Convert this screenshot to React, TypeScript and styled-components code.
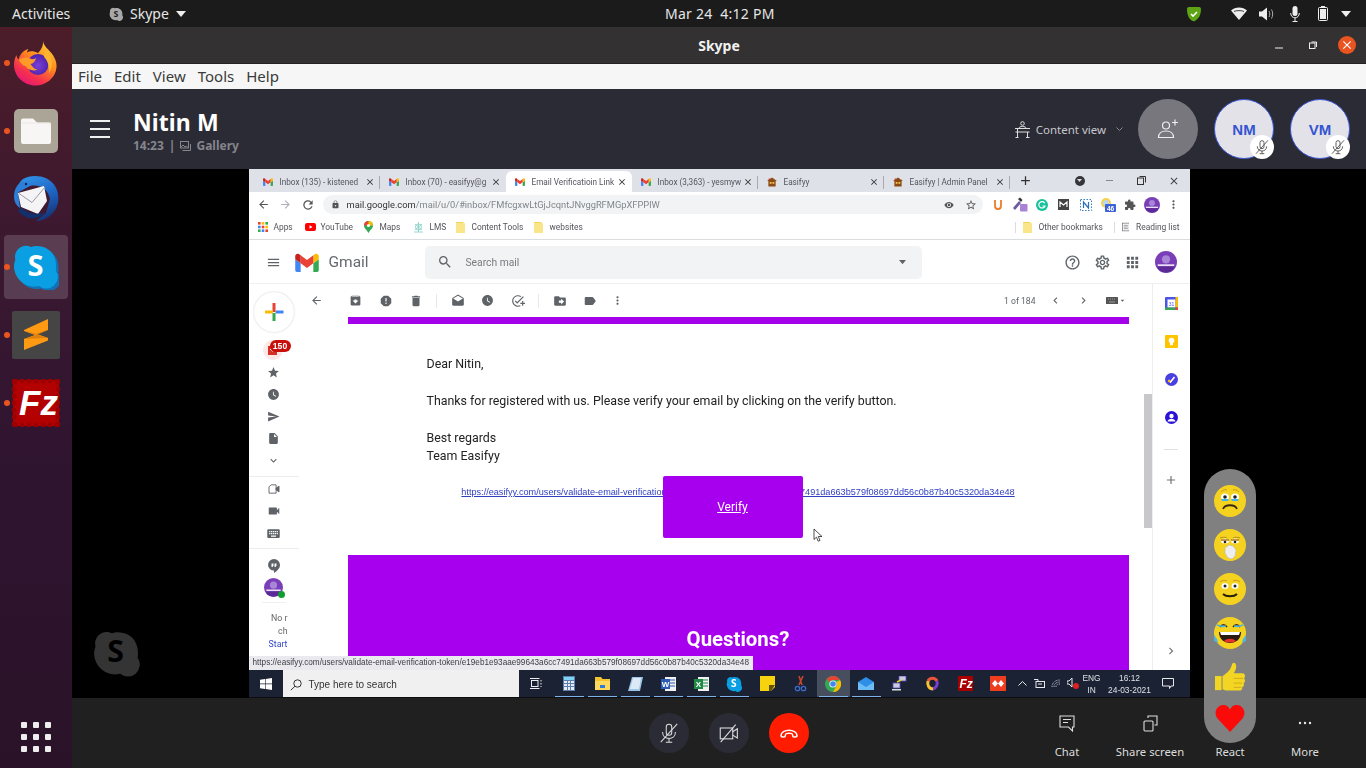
import React from 'react';
import styled, { createGlobalStyle } from 'styled-components';
import {
  MdAddTask, MdApps, MdArchive, MdArrowBack, MdArrowForward, MdChevronLeft, MdChevronRight, MdDelete, MdDrafts,
  MdDriveFileMove, MdExpandMore, MdExtension, MdHelpOutline, MdInsertDriveFile, MdKeyboard, MdLabel, MdLock, MdMenu,
  MdMoreVert, MdOutlineSettings, MdOutlineStarBorder, MdRefresh, MdRemoveRedEye, MdReport, MdSearch,
  MdSend, MdStar, MdVideocam, MdWatchLater, MdAdd, MdClose, MdArrowDropDown,
} from 'react-icons/md';

const Global = createGlobalStyle`
  html, body { margin: 0; padding: 0; background: #000; }
  * { box-sizing: border-box; }
`;

const UI = `"Noto Sans", "Open Sans", sans-serif`;
const WEB = `Roboto, "Liberation Sans", sans-serif`;

const Root = styled.div`
  position: relative; width: 1366px; height: 768px; overflow: hidden;
  display: flex; flex-direction: column; font-family: ${UI}; background: #000;
`;

/* Ubuntu top bar */
const TopBar = styled.header`
  height: 27px; flex: none; background: #1b1b1b; color: #e6e6e6; display: flex; align-items: center;
  font-size: 14px; padding-right: 13px;
`;
const Activities = styled.span`margin-left: 12px; width: 97px;`;
const AppMenu = styled.span`display: flex; align-items: center; gap: 7px; width: 556px;`;
const DateText = styled.span`width: 109px; text-align: center; white-space: pre; letter-spacing: .25px;`;
const Tray = styled.div`margin-left: auto; display: flex; align-items: center;`;
const TraySlot = styled.span<{ $w?: number; $mr?: number }>`
  width: ${p => p.$w ?? 28}px; margin-right: ${p => p.$mr ?? 0}px; display: flex; justify-content: center; align-items: center;
`;

const Body = styled.div`flex: 1; display: flex; min-height: 0;`;

/* Dock */
const Dock = styled.nav`
  width: 72px; flex: none; padding-top: 2px; display: flex; flex-direction: column;
  background: linear-gradient(180deg, #4c1d29 0%, #3b1830 30%, #2f1430 60%, #2a1328 100%);
`;
const DockItem = styled.div<{ $selected?: boolean; $dot?: boolean }>`
  position: relative; height: 68px; display: flex; align-items: center; justify-content: center;
  ${p => p.$selected ? `
    &::before { content: ''; position: absolute; left: 4px; right: 4px; top: 2px; bottom: 2px; border-radius: 4px; background: rgba(255,255,255,.16); }
  ` : ''}
  ${p => p.$dot ? `
    &::after { content: ''; position: absolute; left: 4px; top: 50%; margin-top: -3px; width: 6px; height: 6px; border-radius: 50%; background: #e95420; }
  ` : ''}
  & > svg { position: relative; }
`;
const DockGrid = styled.div`
  margin: auto 0 16px 21px; display: grid; grid-template-columns: repeat(3, 6px); grid-auto-rows: 6px; gap: 6px;
`;
const DockGridDot = styled.i`background: #eee; border-radius: 1px; display: block;`;

/* Skype window */
const Win = styled.main`flex: 1; min-width: 0; display: flex; flex-direction: column;`;
const TitleBar = styled.div`
  height: 37px; flex: none; background: #333131; color: #f2f2f2; display: grid; grid-template-columns: 1fr auto 1fr; align-items: center;
  border-bottom: 1px solid #232323;
`;
const TitleText = styled.span`font-size: 14px; font-weight: 700;`;
const WinControls = styled.div`grid-column: 3; justify-self: end; display: flex; padding-right: 2px; align-items: center;`;
const WinSlot = styled.span`width: 34px; height: 20px; display: flex; align-items: center; justify-content: center;`;
const CloseCircle = styled.span`
  width: 18px; height: 18px; border-radius: 50%; background: #e95420; display: flex; align-items: center; justify-content: center;
`;
const MenuBar = styled.div`
  height: 25px; flex: none; background: #f6f6f6; color: #3a3a3a; font-size: 15px; display: flex; align-items: center; gap: 12px; padding: 0 0 2px 6px;
`;

const CallHeader = styled.div`
  height: 80px; flex: none; background: #2b2b36; display: flex; align-items: center; padding: 0 16px 0 18px;
`;
const Burger = styled.div`
  width: 20px; display: flex; flex-direction: column; gap: 6px; margin-right: 23px;
`;
const BurgerLine = styled.i`display: block; height: 2px; background: #f0f0f0;`;
const CallInfo = styled.div`display: flex; flex-direction: column; margin-top: 1px;`;
const CallName = styled.div`font-size: 23px; font-weight: 700; color: #fff; line-height: 32px; letter-spacing: .1px;`;
const CallMeta = styled.div`
  display: flex; align-items: center; gap: 5px; color: #85858c; font-size: 12px; font-weight: 700; line-height: 16px;
`;
const HeaderRight = styled.div`margin-left: auto; display: flex; align-items: center;`;
const ContentView = styled.div`display: flex; align-items: center; color: #c8c8cc; font-size: 11.5px; gap: 6px; margin-right: 15px;`;
const Chevron = styled.span`margin-left: 4px; display: flex;`;
const AddCircle = styled.div`
  width: 60px; height: 60px; border-radius: 50%; background: #77777d; display: flex; align-items: center; justify-content: center; margin-right: 16px;
`;
const Avatar = styled.div<{ $last?: boolean }>`
  position: relative; width: 60px; height: 60px; border-radius: 50%; background: #e4e2e9; border: 1px solid #3b57d6;
  display: flex; align-items: center; justify-content: center; color: #3454d1; font-size: 15px; font-weight: 700;
  font-family: "Liberation Sans", sans-serif; margin-right: ${p => (p.$last ? 0 : 16)}px;
`;
const MuteBadge = styled.span`
  position: absolute; right: -1px; bottom: -1px; width: 24px; height: 24px; border-radius: 50%; background: #fff;
  display: flex; align-items: center; justify-content: center;
`;

const Stage = styled.section`flex: 1; min-height: 0; background: #000; display: flex; justify-content: center; position: relative;`;
const Watermark = styled.div`position: absolute; left: 20px; top: 460px; display: flex;`;

/* Shared screen */
const Screen = styled.div`
  position: relative; width: 941px; height: 529px; background: #fff; display: flex; flex-direction: column; overflow: hidden;
  filter: blur(.3px); font-family: ${WEB};
`;
const TabStrip = styled.div`
  height: 23px; flex: none; background: #dfe1e9; display: flex; align-items: flex-end; padding-left: 5px; color: #4b4b55;
`;
const Tab = styled.div<{ $active?: boolean; $sep?: boolean }>`
  position: relative; width: 126px; height: 21px; display: flex; align-items: center; padding-left: 9px; font-size: 8.2px;
  background: ${p => (p.$active ? '#fff' : 'transparent')}; border-radius: 6px 6px 0 0;
  ${p => (p.$sep ? `&::after { content:''; position:absolute; right:0; top:5px; bottom:3px; width:1px; background:#a9a9b2; }` : '')}
`;
const TabLabel = styled.span`width: 81px; margin-left: 7px; white-space: nowrap; color: #555560; flex: none;`;
const TabClose = styled.span`display: flex; margin-left: 4px; color: #333; flex: none;`;
const StripRight = styled.div`margin-left: auto; display: flex; height: 23px; align-items: center;`;
const StripPlus = styled.div`margin: 0 0 0 8px; height: 23px; display: flex; align-items: center; color: #333;`;
const StripSlot = styled.span`width: 32px; height: 23px; display: flex; align-items: center; justify-content: center; color: #444;`;
const StripOrb = styled.span`
  width: 10px; height: 10px; border-radius: 50%; background: #35353b; margin-right: 9px; display: flex; align-items: center; justify-content: center;
`;

const Toolbar = styled.div`height: 25px; flex: none; display: flex; align-items: center; padding-left: 4px; background: #fff;`;
const NavSlot = styled.span<{ $dim?: boolean }>`
  width: 22px; display: flex; justify-content: center; color: ${p => (p.$dim ? '#b0b0b6' : '#555')};
`;
const Omni = styled.div`
  margin-left: 4px; width: 660px; height: 19px; border-radius: 10px; background: #f1f3f4; display: flex; align-items: center;
  padding: 0 6px 0 8px; font-size: 9.3px; color: #80868b; gap: 7px;
`;
const UrlHost = styled.span`color: #333;`;
const OmniEnd = styled.div`margin-left: auto; display: flex; gap: 11px; color: #555; align-items: center;`;
const ExtGroup = styled.div`display: flex; padding-left: 4px;`;
const ExtSlot = styled.span`width: 22px; display: flex; justify-content: center; align-items: center;`;

const Bookmarks = styled.div`
  height: 23px; flex: none; display: flex; align-items: center; font-size: 8.4px; color: #54545c; padding: 0 0 2px 9px; border-bottom: 1px solid #dadce0;
`;
const Bookmark = styled.span<{ $w: number; $g?: number }>`
  display: flex; align-items: center; gap: ${p => p.$g ?? 6}px; width: ${p => p.$w}px; white-space: nowrap; flex: none;
`;
const BookmarksEnd = styled.div`margin-left: auto; display: flex; align-items: center; padding-right: 10px;`;
const BmDivider = styled.i`display: block; width: 1px; height: 11px; background: #dadce0; margin: 0 7px;`;

const GmailBar = styled.div`
  height: 44px; flex: none; display: flex; align-items: center; border-bottom: 1px solid #eef0f1; padding: 1px 0 0 17px; color: #5f6368;
`;
const BurgerGap = styled.span`width: 14px; flex: none;`;
const GmailWord = styled.span`margin: 0 57px 0 10px; font-size: 15.5px; color: #666a6f; width: 39px;`;
const SearchBox = styled.div`
  width: 497px; height: 33px; background: #f1f3f4; border-radius: 5px; display: flex; align-items: center; padding: 0 16px 0 12px;
  font-size: 10.3px; color: #777b80; gap: 13px;
`;
const SearchCaret = styled.span`margin-left: auto; display: flex;`;
const GmailEnd = styled.div`margin-left: auto; display: flex; align-items: center; padding-right: 9px;`;
const GmailSlot = styled.span<{ $ml?: number }>`width: 30px; margin-left: ${p => p.$ml ?? 0}px; display: flex; justify-content: center; color: #5f6368;`;

const MailBody = styled.div`flex: 1; min-height: 0; display: flex;`;
const LeftRail = styled.aside`width: 50px; flex: none; display: flex; flex-direction: column; align-items: center; color: #5f6368;`;
const Fab = styled.div`
  width: 40px; height: 40px; border-radius: 50%; background: #fff; margin: 8px 0 7px; box-shadow: 0 0 2px #c8c8c8;
  display: flex; align-items: center; justify-content: center; flex: none;
`;
const RailSlot = styled.span`
  height: 22px; width: 100%; flex: none; display: flex; align-items: center; justify-content: center;
`;
const InboxSlot = styled(RailSlot)`position: relative;`;
const InboxHalo = styled.span`
  width: 20px; height: 20px; border-radius: 50%; background: #fce8e6; display: flex; align-items: center; justify-content: center; margin-left: -2px;
`;
const InboxBadge = styled.span`
  position: absolute; left: 21px; top: 1px; height: 12px; width: 21px; background: #c80f0a; color: #fff; font-size: 8.6px; font-weight: 700;
  border-radius: 7px; display: flex; align-items: center; justify-content: center; font-family: "Liberation Sans", sans-serif;
`;
const RailRule = styled.i<{ $t: number; $b: number }>`
  display: block; width: 100%; height: 1px; background: #ececee; margin: ${p => p.$t}px 0 ${p => p.$b}px; flex: none;
`;
const RailRuleShort = styled.i`display: block; width: 24px; height: 1px; background: #f0f0f2; margin-top: 4px; flex: none;`;
const AvatarSlot = styled(RailSlot)`height: 21px;`;
const PresenceWrap = styled.span`position: relative; display: flex;`;
const Presence = styled.i`
  position: absolute; right: -2px; bottom: -1px; width: 7px; height: 7px; border-radius: 50%; background: #0f9d30; border: 0;
`;
const RailNote = styled.div`
  width: 100%; text-align: right; padding-right: 11px; font-size: 8.8px; line-height: 13px; color: #666; margin-top: 9px;
`;
const RailLink = styled.div`color: #3347c9;`;

const Main = styled.div`flex: 1; min-width: 0; position: relative; display: flex; flex-direction: column;`;
const MailTools = styled.div`height: 33px; flex: none; display: flex; align-items: center; padding-left: 3px; color: #5f6368;`;
const ToolSlot = styled.span<{ $w?: number }>`width: ${p => p.$w ?? 30}px; flex: none; display: flex; justify-content: center; align-items: center;`;
const ToolSep = styled.i`
  display: block; width: 1px; height: 14px; background: #e8e8ea; margin: 0 5.5px; flex: none;
`;
const BackGap = styled.span`width: 9px; flex: none;`;
const Pager = styled.div`margin-left: auto; display: flex; align-items: center; padding-right: 16px; font-size: 8.6px; color: #5f6368;`;
const PagerCount = styled.span`margin-right: 6px;`;
const Email = styled.div`flex: 1; min-height: 0; margin: 0 23px 0 49px; display: flex; flex-direction: column;`;
const Band = styled.div`height: 7px; flex: none; background: #a400ea;`;
const EmailText = styled.div`padding: 31px 0 0 79px; font-size: 12.4px; line-height: 18px; color: #222; flex: none;`;
const Para = styled.p`margin: 0 0 19px;`;
const ParaLast = styled.p`margin: 0;`;
const LinkRow = styled.div`position: relative; height: 90px; flex: none; padding-top: 15px; text-align: center;`;
const MailLink = styled.a`
  font-family: "Liberation Sans", sans-serif; font-size: 9.15px; line-height: 18px; color: #2f3fc0; text-decoration: underline; white-space: nowrap;
`;
const VerifyBtn = styled.div`
  position: absolute; left: 315px; top: 11px; width: 140px; height: 62px; background: #a600ee; border-radius: 2px; color: #fff; font-size: 12px;
  text-decoration: underline; display: flex; align-items: center; justify-content: center;
`;
const Footerish = styled.div`flex: 1; background: #a600ee; color: #fff; display: flex; justify-content: center; padding-top: 69px;`;
const Questions = styled.div`font-size: 20.4px; font-weight: 700; line-height: 30px;`;
const ScrollThumb = styled.i`position: absolute; right: 0; top: 110px; width: 8px; height: 134px; background: #c8c8ca; display: block;`;
const CursorMark = styled.span`position: absolute; left: 514px; top: 244px; display: flex;`;

const RightRail = styled.aside`
  width: 38px; flex: none; border-left: 1px solid #eceeef; display: flex; flex-direction: column; align-items: center; color: #70757a;
`;
const RightSlot = styled.span`height: 38px; width: 100%; flex: none; display: flex; align-items: center; justify-content: center;`;
const RightRule = styled.i`display: block; width: 14px; height: 1px; background: #dfe0e2; margin: 13px 0 11px;`;
const RightBottom = styled(RightSlot)`margin-top: auto;`;
const StatusTip = styled.div`
  position: absolute; left: 0; top: 487px; height: 14px; padding: 0 4px; background: #e9e9ee; font-size: 8.2px; line-height: 14px; color: #3c3c44;
  font-family: "Liberation Sans", sans-serif; white-space: nowrap;
`;

const Taskbar = styled.div`
  height: 28px; flex: none; background: #1a2234; border-bottom: 1px solid #0e0e10; display: flex; align-items: stretch; color: #e8e8ec; font-family: "Liberation Sans", sans-serif;
`;
const StartBtn = styled.span`width: 34px; display: flex; align-items: center; justify-content: center;`;
const WinSearch = styled.div`
  width: 236px; background: #f0f0f0; color: #333; display: flex; align-items: center; gap: 7px; padding: 2px 0 0 7px; font-size: 10px;
`;
const TaskSlot = styled.span<{ $w?: number; $open?: boolean; $active?: boolean; $ml?: number }>`
  width: ${p => p.$w ?? 33}px; margin-left: ${p => p.$ml ?? 0}px; flex: none; display: flex; align-items: center; justify-content: center; position: relative;
  background: ${p => (p.$active ? '#474e5e' : 'transparent')};
  ${p => (p.$open ? `&::after { content:''; position:absolute; left:2px; right:2px; bottom:0; height:1.5px; background:#7cb3ea; }` : '')}
`;
const TaskClock = styled.div`
  width: 48px; flex: none; font-size: 8.4px; line-height: 12px; text-align: center; display: flex; flex-direction: column; justify-content: center; color: #dfe0e6; white-space: nowrap;
`;
const TaskLang = styled(TaskClock)`width: 20px;`;
const TaskDate = styled(TaskClock)`width: 48px; margin-left: 4px;`;

/* Call footer */
const Footer = styled.footer`height: 70px; flex: none; background: #202020; display: flex; align-items: center; padding: 0 23px 0 577px;`;
const RoundBtn = styled.span<{ $danger?: boolean }>`
  width: 40px; height: 40px; border-radius: 50%; margin-right: 20px; display: flex; align-items: center; justify-content: center; flex: none;
  background: ${p => (p.$danger ? '#ff1c00' : '#2b2b36')};
`;
const FooterEnd = styled.div`margin-left: auto; display: flex; height: 100%;`;
const FootAction = styled.div<{ $w: number }>`
  width: ${p => p.$w}px; display: flex; flex-direction: column; align-items: center; padding-top: 15px; color: #dcdcdc; font-size: 11.3px; white-space: nowrap;
`;
const FootIcon = styled.span`height: 20px; display: flex; align-items: center; justify-content: center;`;
const FootLabel = styled.span`margin-top: 11px; line-height: 16px;`;

const ReactionPill = styled.div`
  position: absolute; left: 1204px; top: 469px; width: 52px; height: 274px; border-radius: 26px; background: #808080;
  display: flex; flex-direction: column; align-items: center; padding-top: 16px; gap: 12px;
`;
const FixedSvg = styled.svg`flex: none;`;
const HeartSvg = styled.svg`flex: none; margin-top: -1px;`;

/* ---------- drawings ---------- */
const Firefox = () => (
  <svg width="46" height="46" viewBox="0 0 46 46">
    <defs>
      <linearGradient id="ffa" x1="0.8" y1="0" x2="0.2" y2="1">
        <stop offset="0" stopColor="#ffd23a" /><stop offset=".4" stopColor="#ff8a1e" /><stop offset=".75" stopColor="#f52f4f" /><stop offset="1" stopColor="#e3147c" />
      </linearGradient>
      <radialGradient id="ffb" cx=".5" cy=".55" r=".55">
        <stop offset="0" stopColor="#7b3fd8" /><stop offset="1" stopColor="#4b22a8" />
      </radialGradient>
    </defs>
    <path d="M30 1c.8 5 4 7 7 10.500 5 5.500 7 11 6.500 16C42.500 38 33 45.500 22.500 45.500 11 45.500 1 36.500 1 24.500c0-3 .8-6.500 2.500-9.500.2 2 1 3.500 2 4.500C7 14 11 10 15.500 9c-1 1.500-1.500 2.500-1.500 3.500 3-1.800 7-1.500 11 .5C29 9 30.500 5 30 1z" fill="url(#ffa)" />
    <circle cx="25" cy="24.500" r="10.500" fill="url(#ffb)" />
    <path d="M6 20c4-3 8-3 11-1.500 2.500 1.200 4 1 6-.5-1 4-3 5.500-5.500 6 1.500 1.500 3 5 7 5.500-4 2-10 .5-12-3.500-2 0-5-3-6.500-6z" fill="#ff9a26" />
    <path d="M31 8c4 3 8 8 8 15 0 4-1 7-3 10 .5-6-1-12-5-16 1-3 1-6 0-9z" fill="#ffb42e" />
  </svg>
);
const FilesIcon = () => (
  <svg width="44" height="44" viewBox="0 0 44 44">
    <rect width="44" height="44" rx="5" fill="#aba597" />
    <path d="M7 11.500a2 2 0 0 1 2-2h10l4 4h12a2 2 0 0 1 2 2V33a2 2 0 0 1-2 2H9a2 2 0 0 1-2-2z" fill="#f7f6f4" />
    <path d="M7 14h30" stroke="#e6e4df" strokeWidth=".8" />
  </svg>
);
const Thunderbird = () => (
  <svg width="48" height="48" viewBox="0 0 48 48">
    <defs>
      <linearGradient id="tb" x1="0.3" y1="0" x2="0.7" y2="1"><stop offset="0" stopColor="#2f8fe6" /><stop offset=".55" stopColor="#1c5fbe" /><stop offset="1" stopColor="#15306f" /></linearGradient>
    </defs>
    <path d="M11 4C20-1 36 0 43 11c6 10 4 23-5 30-4 3-9 5-14 5l10-8 4-14C36 14 28 9 18 11L5 18C5 12 7 7 11 4z" fill="url(#tb)" />
    <path d="M2 22C2 14 5 9 11 6l3 5L6 16l2 17c-3-2-6-6-6-11z" fill="#2b7fd8" />
    <path d="M6 18l26-7 3 15-9 13-17-7z" fill="#f4f4f6" />
    <path d="M7 18.500l13 9 13-15.500" fill="none" stroke="#9a9aa4" strokeWidth="1" />
    <path d="M9 32c5 6 12 8 24 6-7 7-18 8-27-2z" fill="#12306c" />
    <circle cx="14" cy="9" r="1.200" fill="#0c2050" />
  </svg>
);
const SkypeBlob = ({ size = 46, fill = '#0a9fe2', fg = '#fff', shade = true }: { size?: number; fill?: string; fg?: string; shade?: boolean }) => (
  <svg width={size} height={size} viewBox="0 0 46 46">
    <path d="M3 14a11 11 0 0 1 16-10c2.500-.6 3.500-1 6-1 11 0 19 8 19 19 0 2 .200 3 -.300 5.500A11.500 11.500 0 0 1 27 43c-2 .500-3 .500-5 .500C12 43.500 2 35 2 23c0-2 .500-4 1.300-6z" fill={shade ? '#1272b8' : fill} transform={shade ? 'translate(1.500 1.500)' : undefined} />
    {shade && <path d="M2 13a11 11 0 0 1 16-10c2.500-.6 3.500-1 6-1 11 0 19 8 19 19 0 2 .200 3 -.300 5.500A11.500 11.500 0 0 1 26 42c-2 .500-3 .500-5 .500C11 42.500 1 34 1 22c0-2 .500-4 1.300-6z" fill={fill} />}
    <text x="22.500" y="32" textAnchor="middle" fontFamily='"Open Sans", sans-serif' fontWeight="700" fontSize="29" fill={fg}>S</text>
  </svg>
);
const Sublime = () => (
  <svg width="48" height="48" viewBox="0 0 48 48">
    <rect width="48" height="48" rx="2" fill="#454545" />
    <path d="M36 8v11L25 23l11 4v2.500L12 39V28l11-4-11-4v-1z" fill="#ff9a12" />
    <path d="M12 19.500L25 23l11-4-11 5-13-4.500zM12 28l24-1-11-3.500z" fill="#e0800c" />
  </svg>
);
const Filezilla = () => {
  const scallop = [3, 10, 17, 24, 31, 38, 45];
  return (
    <svg width="48" height="48" viewBox="0 0 48 48">
      <rect x="1" y="1" width="46" height="46" fill="#b30000" />
      {scallop.map(p => (
        <g key={p} fill="#9c0000">
          <circle cx={p} cy="2" r="2.500" /><circle cx={p} cy="46" r="2.500" /><circle cx="2" cy={p} r="2.500" /><circle cx="46" cy={p} r="2.500" />
        </g>
      ))}
      <text x="7" y="36" fontFamily='"Liberation Sans", sans-serif' fontStyle="italic" fontWeight="700" fontSize="35" fill="#fff">Fz</text>
    </svg>
  );
};
const Wifi = () => (
  <svg width="16" height="13" viewBox="0 0 16 13"><path d="M8 13L0 3.500C2 1.500 5 .5 8 .5s6 1 8 3z" fill="#eee" /><path d="M3 4.500C5 3.300 11 3.300 13 4.500" stroke="#1b1b1b" strokeWidth=".8" fill="none" /></svg>
);
const Speaker = () => (
  <svg width="16" height="14" viewBox="0 0 16 14"><path d="M0 4.500h3L8 .5v13l-5-4H0z" fill="#eee" /><path d="M10 4c1 1.500 1 4.500 0 6M12.500 2.500c1.600 2.500 1.600 6.500 0 9" stroke="#aaa" strokeWidth="1" fill="none" /></svg>
);
const MicTop = () => (
  <svg width="10" height="16" viewBox="0 0 10 16"><rect x="2.500" y="0" width="5" height="10" rx="2.500" fill="#eee" /><path d="M.7 7c0 3 2 4.800 4.300 4.800S9.300 10 9.300 7M5 12v3M2.500 15.500h5" stroke="#eee" fill="none" /></svg>
);
const Battery = () => (
  <svg width="10" height="15" viewBox="0 0 10 15"><rect x="3" y="0" width="4" height="2" fill="#eee" /><rect x=".5" y="1.500" width="9" height="13" rx="1" fill="none" stroke="#eee" /><rect x="2" y="3" width="6" height="10" fill="#eee" /></svg>
);
const DownTri = ({ c = '#eee', w = 10 }: { c?: string; w?: number }) => (
  <svg width={w} height={w * .6} viewBox="0 0 10 6"><path d="M0 0h10L5 6z" fill={c} /></svg>
);
const MuteMic = ({ c = '#555', s = 16, sw = 1 }: { c?: string; s?: number; sw?: number }) => (
  <svg width={s} height={s} viewBox="0 0 24 24" fill="none" stroke={c} strokeWidth={sw * 1.4}>
    <rect x="9" y="2.500" width="6" height="12" rx="3" /><path d="M5 11c0 4.500 3.200 7 7 7s7-2.500 7-7M12 18v4M8.500 22h7M3 22L21 2" />
  </svg>
);
const Presenter = () => (
  <svg width="15" height="17" viewBox="0 0 15 17" fill="none" stroke="#ddd" strokeWidth="1"><circle cx="7.500" cy="2.500" r="1.800" /><path d="M4 7.500c0-1.500 1.500-2 3.500-2s3.500.5 3.500 2M0 7.500h15M.5 11h14M2.500 7.500V16M12.500 11v5M.5 16.500h3M11 16.500h3.500" /></svg>
);
const AddPerson = () => (
  <svg width="22" height="20" viewBox="0 0 22 20" fill="none" stroke="#eee" strokeWidth="1.200"><circle cx="9" cy="6.500" r="3.500" /><path d="M1.500 18.500c0-4 3-6.500 7.500-6.500s7.500 2.500 7.500 6.500zM18 .5v6M15 3.500h6" /></svg>
);
const GalleryIco = () => (
  <svg width="11" height="10" viewBox="0 0 11 10" fill="none" stroke="#85858c"><rect x=".5" y=".5" width="8" height="6.500" /><path d="M2.500 9.500h8V3" /><path d="M1 6l2-2 2 2 1.500-1L8 6.500" /></svg>
);
const GmailM = ({ w = 24, h = 19 }: { w?: number; h?: number }) => (
  <FixedSvg width={w} height={h} viewBox="0 0 52 42">
    <path d="M3.600 42h8.400V22.500L0 14v24.400C0 40.400 1.600 42 3.600 42z" fill="#4285f4" />
    <path d="M40 42h8.400c2 0 3.600-1.600 3.600-3.600V14l-12 8.500z" fill="#34a853" />
    <path d="M40 5v17.500L52 14V7c0-4.400-5-6.900-8.600-4.200z" fill="#fbbc04" />
    <path d="M12 22.500V5l14 10.500L40 5v17.500L26 33z" fill="#ea4335" />
    <path d="M0 7v7l12 8.500V5L8.600 2.800C5 .1 0 2.600 0 7z" fill="#c5221f" />
  </FixedSvg>
);
const EasifyyFav = () => (
  <FixedSvg width="10" height="10" viewBox="0 0 11 10"><path d="M5.500 0L11 4H9.500v6h-8V4H0z" fill="#8a4b16" /><rect x="3" y="5" width="2" height="2" fill="#f4c24b" /><rect x="6" y="5" width="2" height="2" fill="#f4c24b" /><path d="M1 2l2-1 1 2z" fill="#d7322f" /></FixedSvg>
);
const AppsGrid = () => {
  const cols = ['#ea4335', '#fbbc04', '#34a853', '#4285f4', '#ea4335', '#fbbc04', '#34a853', '#4285f4', '#ea4335'];
  return (
    <svg width="10" height="10" viewBox="0 0 10 10">{cols.map((c, i) => <rect key={i} x={(i % 3) * 3.700} y={Math.floor(i / 3) * 3.700} width="2.600" height="2.600" fill={c} />)}</svg>
  );
};
const YouTube = () => (
  <svg width="11" height="8" viewBox="0 0 11 8"><rect width="11" height="8" rx="2" fill="#f00" /><path d="M4.500 2.200L7.500 4l-3 1.800z" fill="#fff" /></svg>
);
const MapsPin = () => (
  <svg width="9" height="12" viewBox="0 0 9 12"><path d="M4.500 12C3 9 0 7.500 0 4.500a4.500 4.500 0 0 1 9 0C9 7.500 6 9 4.500 12z" fill="#34a853" /><path d="M0 4.500a4.500 4.500 0 0 1 4.500-4.500v4.500z" fill="#ea4335" /><path d="M9 4.500A4.500 4.500 0 0 0 4.500 0v4.500z" fill="#fbbc04" /><circle cx="4.500" cy="4.500" r="1.600" fill="#fff" /></svg>
);
const LmsIco = () => (
  <svg width="11" height="11" viewBox="0 0 11 11" fill="none" stroke="#7ccbc4" strokeWidth=".8"><circle cx="5.500" cy="5" r="3" /><path d="M1 10h9M5.500 0v10M2 2l7 6M9 2L2 8" /></svg>
);
const BmFolder = () => (
  <svg width="9" height="11" viewBox="0 0 9 11"><path d="M0 0h7l2 1.500V11H0z" fill="#fbe58a" /><path d="M0 0h7v1H0z" fill="#f4d35a" /></svg>
);
const ReadingList = () => (
  <svg width="9" height="10" viewBox="0 0 9 10" fill="none" stroke="#6a6a70" strokeWidth=".8"><rect x=".4" y=".4" width="8.200" height="9.200" /><path d="M2 3h5M2 5h5M2 7h5" /></svg>
);
const ExtU = () => <svg width="10" height="12" viewBox="0 0 10 12"><path d="M2 1v6a3 3 0 0 0 6 0V1" fill="none" stroke="#ef7a2a" strokeWidth="1.800" /></svg>;
const ExtDropper = () => (
  <svg width="16" height="15" viewBox="0 0 16 15"><rect x="8" y="7" width="7.500" height="7.500" rx="1" fill="#a981d5" /><path d="M1 11l6-7 2 2-6 7z" fill="#6a5aa0" /><path d="M6 2l2-1.500 2.500 2.500L9 5z" fill="#333" /></svg>
);
const ExtG = () => <svg width="12" height="12" viewBox="0 0 12 12"><circle cx="6" cy="6" r="6" fill="#15c39a" /><path d="M8.800 4.200A3.200 3.200 0 1 0 9 7H6.500" fill="none" stroke="#fff" strokeWidth="1.200" /></svg>;
const ExtM = () => <svg width="11" height="11" viewBox="0 0 11 11"><rect width="11" height="11" fill="#444" /><path d="M2 8V3l3.500 3L9 3v5" fill="none" stroke="#fff" strokeWidth="1.200" /></svg>;
const ExtN = () => <svg width="12" height="12" viewBox="0 0 12 12"><rect x=".5" y=".5" width="11" height="11" fill="none" stroke="#3b7fc4" strokeDasharray="1.500 1.500" /><path d="M3.500 9V3l5 6V3" fill="none" stroke="#2a6fc0" strokeWidth="1.200" /></svg>;
const ExtSun = () => (
  <svg width="16" height="15" viewBox="0 0 16 15"><circle cx="6" cy="6" r="5" fill="#f7d34a" /><circle cx="6" cy="6" r="3" fill="#bcd7f0" /><rect x="5" y="7" width="11" height="8" rx="1" fill="#3c62d8" /><text x="10.500" y="13.500" textAnchor="middle" fontFamily='"Liberation Sans", sans-serif' fontWeight="700" fontSize="6.500" fill="#fff">46</text></svg>
);
const ProfileOrb = ({ s = 16 }: { s?: number }) => (
  <svg width={s} height={s} viewBox="0 0 24 24">
    <circle cx="12" cy="12" r="12" fill="#7a3fb8" /><circle cx="12" cy="9" r="4.500" fill="#a885d6" /><rect x="3" y="14.500" width="18" height="2" fill="#e9dff7" /><path d="M2 17h20a11 11 0 0 1-20 0z" fill="#5b2a97" />
  </svg>
);
const PlusColor = () => (
  <svg width="20" height="20" viewBox="0 0 20 20">
    <rect x="8.500" y="1" width="3" height="9" fill="#ea4335" /><rect x="11.500" y="8.500" width="8" height="3" fill="#4285f4" /><rect x="8.500" y="11" width="3" height="8" fill="#34a853" /><rect x="1" y="8.500" width="8" height="3" fill="#fbbc04" />
  </svg>
);
const InboxMark = () => (
  <svg width="11" height="11" viewBox="0 0 11 11"><path d="M1 1h9v9H1z" fill="#d93025" /><path d="M3 4l2.500 2L8 4" stroke="#fff" fill="none" /></svg>
);
const HangoutIco = () => (
  <svg width="12" height="14" viewBox="0 0 12 14"><path d="M6 0a6 6 0 0 1 6 6c0 3.500-3 6-6 8v-2.500A5.800 5.800 0 0 1 0 6a6 6 0 0 1 6-6z" fill="#5f6368" /><path d="M3.500 4.500h2v2l-1 1.500h-1zM6.500 4.500h2v2l-1 1.500h-1z" fill="#fff" /></svg>
);
const VideoOutline = () => (
  <svg width="12" height="10" viewBox="0 0 14 12" fill="none" stroke="#5f6368" strokeWidth="1.100"><path d="M1 3.500L3.500 1H9.500v10H1z" /><path d="M9.500 5L13 2.500v7L9.500 7z" fill="#5f6368" /></svg>
);
const CalIco = () => (
  <svg width="13" height="13" viewBox="0 0 13 13"><rect width="13" height="13" rx="1" fill="#4a55e8" /><rect x="2.500" y="2.500" width="8" height="8" fill="#fff" /><rect x="10.500" y="0" width="2.500" height="10.500" fill="#fbbc04" /><rect x="0" y="10.500" width="10.500" height="2.500" fill="#34a853" /><rect x="10.500" y="10.500" width="2.500" height="2.500" fill="#ea4335" /><text x="6.500" y="8.500" textAnchor="middle" fontSize="5" fontFamily='"Liberation Sans", sans-serif' fill="#4a55e8">31</text></svg>
);
const KeepIco = () => (
  <svg width="13" height="13" viewBox="0 0 13 13"><rect width="13" height="13" rx="1" fill="#ffc400" /><circle cx="6.500" cy="5.500" r="2.800" fill="#fff" /><rect x="5" y="8" width="3" height="2.200" fill="#fff" /></svg>
);
const TasksIco = () => (
  <svg width="13" height="13" viewBox="0 0 13 13"><circle cx="6.500" cy="6.500" r="6.500" fill="#4a3fe0" /><path d="M3.500 7l2 2 4-5" stroke="#fff" strokeWidth="1.600" fill="none" /><circle cx="4" cy="8" r="1.200" fill="#fbbc04" /></svg>
);
const ContactsIco = () => (
  <svg width="13" height="13" viewBox="0 0 13 13"><circle cx="6.500" cy="6.500" r="6.500" fill="#2a12d8" /><circle cx="6.500" cy="5" r="2.200" fill="#fff" /><path d="M2.500 10.500c.5-2 2-2.800 4-2.800s3.500.8 4 2.800z" fill="#fff" /></svg>
);
const CursorIco = () => (
  <svg width="10" height="14" viewBox="0 0 10 14"><path d="M1 1v10.500l2.500-2.300 1.700 4 1.800-.8-1.700-3.900H9z" fill="#fff" stroke="#222" strokeWidth=".8" /></svg>
);
const KbdTiny = () => (
  <svg width="12" height="7" viewBox="0 0 12 7"><rect width="12" height="7" rx=".5" fill="#555" /><path d="M2 2h1M4 2h1M6 2h1M8 2h1M3 5h6" stroke="#ccc" strokeWidth=".6" /></svg>
);
/* windows taskbar */
const WinLogo = () => (
  <svg width="12" height="12" viewBox="0 0 12 12"><path d="M0 1.700L5 1v4.600H0zM5.600.9L12 0v5.600H5.600zM0 6.300h5v4.700l-5-.7zM5.600 6.300H12V12l-6.400-.9z" fill="#fff" /></svg>
);
const Glass = () => (
  <svg width="12" height="12" viewBox="0 0 12 12" fill="none" stroke="#333"><circle cx="7.500" cy="4.500" r="3.700" /><path d="M5 7.200L.8 11.200" /></svg>
);
const TaskView = () => (
  <svg width="12" height="11" viewBox="0 0 12 11" fill="none" stroke="#eee"><rect x="1.500" y="2.500" width="6.500" height="6" /><path d="M0 .5h9.500M0 10.500h9.500M11 2v1.500M11 5v1.500M11 8v1" /></svg>
);
const Calc = () => (
  <svg width="12" height="15" viewBox="0 0 12 15"><rect width="12" height="15" fill="#5d7fb0" /><rect x="1" y="1" width="10" height="3" fill="#7fd4f4" /><path d="M1 5h3v2H1zM5 5h2v2H5zM8 5h3v2H8zM1 8h3v2H1zM5 8h2v2H5zM8 8h3v2H8zM1 11h3v3H1zM5 11h2v3H5zM8 11h3v3H8z" fill="#e6ecf6" /></svg>
);
const WinFolder = () => (
  <svg width="15" height="13" viewBox="0 0 15 13"><path d="M0 0h6l1.500 2H15v11H0z" fill="#f4c430" /><rect y="4" width="15" height="9" fill="#ffd95c" /><rect x="5" y="8" width="5" height="3" fill="#2f7bd8" /></svg>
);
const Notebook = () => (
  <svg width="15" height="14" viewBox="0 0 15 14"><path d="M4 0h11l-3 14H0z" fill="#9cc4e4" /><path d="M5 1h8l-2 11H2z" fill="#dbeaf6" /></svg>
);
const Doc = ({ c, l }: { c: string; l: string }) => (
  <svg width="15" height="14" viewBox="0 0 15 14"><rect x="4" y="0" width="11" height="14" fill="#f1f1f1" /><path d="M9 3h5M9 6h5M9 9h5" stroke={c} /><rect x="0" y="2" width="9" height="10" fill={c} /><text x="4.500" y="10" textAnchor="middle" fontFamily='"Liberation Sans", sans-serif' fontWeight="700" fontSize="8" fill="#fff">{l}</text></svg>
);
const Sticky = () => <svg width="15" height="15" viewBox="0 0 15 15"><path d="M0 0h15v11l-4 4H0z" fill="#f6d30e" /><path d="M9 9h6l-4 6H9z" fill="#5e5206" /></svg>;
const Snip = () => (
  <svg width="13" height="16" viewBox="0 0 13 16"><path d="M5 0l3 9M9 0L5 9" stroke="#c8452a" strokeWidth="1.600" /><circle cx="3.500" cy="12.500" r="2.200" fill="none" stroke="#3d6bc8" strokeWidth="1.300" /><circle cx="9.500" cy="12.500" r="2.200" fill="none" stroke="#3d6bc8" strokeWidth="1.300" /></svg>
);
const Chrome = () => (
  <svg width="16" height="16" viewBox="0 0 16 16"><circle cx="8" cy="8" r="8" fill="#34a853" /><path d="M8 0a8 8 0 0 1 7 4H8a4 4 0 0 0-3.500 2L1.800 3A8 8 0 0 1 8 0z" fill="#ea4335" /><path d="M15 4a8 8 0 0 1-7 12l3.500-6A4 4 0 0 0 11.500 6z" fill="#fbbc04" /><circle cx="8" cy="8" r="3.600" fill="#fff" /><circle cx="8" cy="8" r="2.800" fill="#4285f4" /></svg>
);
const MailApp = () => (
  <svg width="16" height="13" viewBox="0 0 16 13"><path d="M0 5L8 0l8 5v8H0z" fill="#2f8fe6" /><path d="M0 5l8 5 8-5v8H0z" fill="#6cbcf5" /></svg>
);
const NetApp = () => (
  <svg width="15" height="15" viewBox="0 0 15 15"><rect x="7" y="0" width="7" height="5" fill="#ccd" stroke="#5a4ac0" strokeWidth=".8" /><rect x="1" y="7" width="7" height="5" fill="#ccd" stroke="#5a4ac0" strokeWidth=".8" /><path d="M5 6l4-2" stroke="#e4d020" strokeWidth="1.500" /><rect x="0" y="13" width="9" height="1.500" fill="#ddd" /></svg>
);
const Loop = () => (
  <svg width="15" height="15" viewBox="0 0 15 15" fill="none" strokeWidth="3"><path d="M3 5a5 5 0 0 1 9 0" stroke="#e8553a" /><path d="M12 5c1 4-1 7-4 8" stroke="#7a3fd0" /><path d="M8 13C4 13 2 9 3 5" stroke="#f6c32c" /></svg>
);
const FzTiny = () => (
  <svg width="15" height="15" viewBox="0 0 15 15"><rect width="15" height="15" fill="#a80000" /><text x="1.500" y="12" fontFamily='"Liberation Sans", sans-serif' fontStyle="italic" fontWeight="700" fontSize="12" fill="#fff">Fz</text></svg>
);
const AnyDesk = () => (
  <svg width="16" height="15" viewBox="0 0 16 15"><rect width="16" height="15" fill="#ef3d1f" /><path d="M5 4l3 3.500L5 11 2 7.500zM11 4l3 3.500L11 11 8 7.500z" fill="#fff" /></svg>
);
const TrayCaret = () => <svg width="9" height="5" viewBox="0 0 9 5" fill="none" stroke="#e8e8ec"><path d="M.5 4.500l4-4 4 4" /></svg>;
const TrayBat = () => <svg width="11" height="9" viewBox="0 0 11 9" fill="none" stroke="#e8e8ec"><rect x="2" y="2.500" width="8.500" height="6" /><path d="M0 .5h4v2M4 5h4" /></svg>;
const TrayWifi = () => <svg width="10" height="9" viewBox="0 0 10 9" fill="none" stroke="#aab"><path d="M1 8c0-4 3-7 8-7M3 8c0-3 2-5 6-5M5 8c0-2 1-3 4-3" strokeDasharray="1 .6" /></svg>;
const TraySound = () => <svg width="12" height="11" viewBox="0 0 12 11"><path d="M0 3h2l3-3v9L2 6H0z" fill="none" stroke="#e8e8ec" /><circle cx="9" cy="8" r="3" fill="#e02020" /></svg>;
const Notify = () => <svg width="12" height="11" viewBox="0 0 12 11" fill="none" stroke="#e8e8ec"><path d="M.5.500h11v7.500H9l-1.500 2.500V8H.5z" /></svg>;
/* call footer */
const CamOff = () => (
  <svg width="20" height="20" viewBox="0 0 24 24" fill="none" stroke="#ddd" strokeWidth="1.300"><rect x="1.500" y="6" width="15" height="13" /><path d="M16.500 10.500L22 7v11l-5.500-3.500M2 23L20 2" /></svg>
);
const HangUp = () => (
  <svg width="18" height="9" viewBox="0 0 18 9" fill="none" stroke="#fff" strokeWidth="1.500"><path d="M1 6.500C1 3.500 5 1.200 9 1.200s8 2.300 8 5.300c0 1-1 1.500-2 1.500h-1c-1 0-1.300-.7-1.300-1.600 0-.8-.2-1.500-1-1.800-1.500-.5-3.900-.5-5.400 0-.8.300-1 1-1 1.800 0 .9-.3 1.600-1.300 1.600H3C2 8 1 7.500 1 6.500z" /></svg>
);
const ChatIco = () => (
  <svg width="16" height="17" viewBox="0 0 16 17" fill="none" stroke="#ddd" strokeWidth="1.100"><path d="M1 1h14v11h-1.500v4l-4-4H1z" /><path d="M4 4.500h8M4 7.500h5" /></svg>
);
const ShareIco = () => (
  <svg width="15" height="17" viewBox="0 0 15 17" fill="none" stroke="#ddd" strokeWidth="1.100"><rect x="1" y="6" width="9" height="10" rx="1" /><path d="M5 3V1h9v9h-2.500" /></svg>
);
const DotsIco = () => (
  <svg width="14" height="4" viewBox="0 0 14 4" fill="#e8e8e8"><circle cx="2" cy="2" r="1.200" /><circle cx="7" cy="2" r="1.200" /><circle cx="12" cy="2" r="1.200" /></svg>
);
/* reactions */
const FaceBase: React.FC<{ children?: React.ReactNode }> = ({ children }) => (
  <FixedSvg width="32" height="32" viewBox="0 0 32 32">
    <circle cx="16" cy="16" r="16" fill="#f5d21f" />
    {children}
  </FixedSvg>
);
const Sad = () => (
  <FaceBase>
    <path d="M7 7c2-2 4-3 6-2M25 7c-2-2-4-3-6-2" stroke="#c99a20" fill="none" />
    <ellipse cx="11" cy="12" rx="4" ry="3.500" fill="#fff" /><ellipse cx="21" cy="12" rx="4" ry="3.500" fill="#fff" />
    <circle cx="11" cy="12" r="1.800" fill="#222" /><circle cx="21" cy="12" r="1.800" fill="#222" />
    <path d="M7 14h8l-1 2H8zM17 14h8l-1 2h-6z" fill="#48b6e6" />
    <path d="M9 24c2-5 12-5 14 0" stroke="#3a2a10" strokeWidth="1.800" fill="none" />
  </FaceBase>
);
const Thinking = () => (
  <FaceBase>
    <path d="M6 9c2-1 5-1 7 0M19 9c2-1 5-1 7 0" stroke="#b48a14" fill="none" />
    <ellipse cx="11" cy="12" rx="4" ry="2.500" fill="#fff" /><ellipse cx="21" cy="12" rx="4" ry="2.500" fill="#fff" />
    <path d="M7 11h8M17 11h8" stroke="#a87a10" strokeWidth="1.400" />
    <circle cx="11" cy="13" r="1.300" fill="#222" /><circle cx="21" cy="13" r="1.300" fill="#222" />
    <path d="M11 19l4-3 4 1 3 4-1 6-3 3-4-1-3-5z" fill="#eee" stroke="#bbb" strokeWidth=".6" />
  </FaceBase>
);
const Smile = () => (
  <FaceBase>
    <path d="M6 9c2-2 5-2 7-1M19 8c2-1 5-1 7 1" stroke="#c99a20" fill="none" />
    <ellipse cx="11" cy="13" rx="3.500" ry="3" fill="#fff" /><ellipse cx="21" cy="13" rx="3.500" ry="3" fill="#fff" />
    <circle cx="11" cy="13" r="1.500" fill="#222" /><circle cx="21" cy="13" r="1.500" fill="#222" />
    <path d="M9 21c3 3 11 3 14 0" stroke="#2a200a" strokeWidth="1.800" fill="none" />
  </FaceBase>
);
const Laugh = () => (
  <FaceBase>
    <path d="M6 10c2-3 5-3 7 0M19 10c2-3 5-3 7 0" stroke="#3a2a10" strokeWidth="1.500" fill="none" />
    <path d="M3 8c2 1 5 2 9 1M29 8c-2 1-5 2-9 1" stroke="#4ab6e6" strokeWidth="1.600" fill="none" />
    <path d="M5 15h22c0 7-5 11-11 11S5 22 5 15z" fill="#2a1a10" />
    <path d="M6 15h20l-1 3H7z" fill="#fff" />
    <path d="M10 24c3-3 9-3 12 0-3 2-9 2-12 0z" fill="#e7332a" />
    <path d="M0 18l3 4 1 4-4-2zM32 18l-3 4-1 4 4-2z" fill="#4ab6e6" />
  </FaceBase>
);
const Thumb = () => (
  <FixedSvg width="30" height="32" viewBox="0 0 32 32">
    <path d="M0 15h7v15H0z" fill="#f3d624" />
    <path d="M8 15c4-2 9-7 10-12 .3-2 3-3 4-1 1.500 3 0 7-2 10h9c2 0 3 1.200 3 3 0 1-.5 2-1 2.500.5.800 1 1.500 1 2.500 0 1.200-.8 2.200-1.500 2.500.3.700.5 1.500.3 2.300-.3 1-1 1.700-1.800 2 .3 2-1 3.700-3 3.700H14c-3 0-4-1-6-1.500z" fill="#f3d624" />
    <path d="M20 17.500h10M20 22.500h9M20 27h8" stroke="#d3a91a" strokeWidth="1" />
  </FixedSvg>
);
const Heart = () => (
  <HeartSvg width="30" height="28" viewBox="0 0 30 28">
    <path d="M15 28L2.500 14.500C-1.500 9.500 1 1.500 8 1c3.500-.2 5.800 1.800 7 4.500C16.200 2.800 18.500.800 22 1c7 .5 9.500 8.500 5.500 13.500z" fill="#fb0a0a" />
  </HeartSvg>
);

const tabs = [
  { t: 'Inbox (135) - kistened', sep: true },
  { t: 'Inbox (70) - easifyy@g' },
  { t: 'Email Verificatioin Link', active: true },
  { t: 'Inbox (3,363) - yesmyw', sep: true },
  { t: 'Easifyy', fav: true, sep: true },
  { t: 'Easifyy | Admin Panel', fav: true, sep: true },
];
const URL = 'https://easifyy.com/users/validate-email-verification-token/e19eb1e93aae99643a6cc7491da663b579f08697dd56c0b87b40c5320da34e48';

export default function App() {
  return (
    <Root>
      <Global />
      <TopBar>
        <Activities>Activities</Activities>
        <AppMenu>
          <SkypeBlob size={14} fill="#a8a8a8" fg="#222" shade={false} />
          Skype
          <DownTri />
        </AppMenu>
        <DateText>Mar 24  4:12 PM</DateText>
        <Tray>
          <TraySlot $w={16} $mr={23}>
            <svg width="16" height="16" viewBox="0 0 16 16"><path d="M3 1h10c1.500 0 2 1 2 2.500 0 5-2 9-6 11.500-1 .5-2 .2-3-.2C2.500 12.500 1 8 1 3.500 1 2 1.500 1 3 1z" fill="#5ea313" /><path d="M5 8l2 2 4-4" stroke="#fff" strokeWidth="1.600" fill="none" /></svg>
          </TraySlot>
          <TraySlot><Wifi /></TraySlot>
          <TraySlot><Speaker /></TraySlot>
          <TraySlot><MicTop /></TraySlot>
          <TraySlot $mr={2}><Battery /></TraySlot>
          <TraySlot $w={14}><DownTri /></TraySlot>
        </Tray>
      </TopBar>
      <Body>
        <Dock>
          <DockItem $dot><Firefox /></DockItem>
          <DockItem $dot><FilesIcon /></DockItem>
          <DockItem><Thunderbird /></DockItem>
          <DockItem $dot $selected><SkypeBlob /></DockItem>
          <DockItem $dot><Sublime /></DockItem>
          <DockItem $dot><Filezilla /></DockItem>
          <DockGrid>{Array.from({ length: 9 }, (_, i) => <DockGridDot key={i} />)}</DockGrid>
        </Dock>
        <Win>
          <TitleBar>
            <span />
            <TitleText>Skype</TitleText>
            <WinControls>
              <WinSlot><svg width="8" height="8" viewBox="0 0 8 8"><path d="M0 7h8" stroke="#eee" /></svg></WinSlot>
              <WinSlot><svg width="8" height="8" viewBox="0 0 8 8" fill="none" stroke="#eee"><rect x=".5" y="2" width="5.500" height="5.500" /><path d="M2.500 1h5v5" /></svg></WinSlot>
              <WinSlot><CloseCircle><MdClose size={14} color="#fff" /></CloseCircle></WinSlot>
            </WinControls>
          </TitleBar>
          <MenuBar>
            <span>File</span><span>Edit</span><span>View</span><span>Tools</span><span>Help</span>
          </MenuBar>
          <CallHeader>
            <Burger><BurgerLine /><BurgerLine /><BurgerLine /></Burger>
            <CallInfo>
              <CallName>Nitin M</CallName>
              <CallMeta>14:23 <span>|</span> <GalleryIco /> Gallery</CallMeta>
            </CallInfo>
            <HeaderRight>
              <ContentView>
                <Presenter />
                Content view
                <Chevron><svg width="7" height="4" viewBox="0 0 7 4" fill="none" stroke="#888"><path d="M.5.500l3 3 3-3" /></svg></Chevron>
              </ContentView>
              <AddCircle><AddPerson /></AddCircle>
              <Avatar>NM<MuteBadge><MuteMic /></MuteBadge></Avatar>
              <Avatar $last>VM<MuteBadge><MuteMic /></MuteBadge></Avatar>
            </HeaderRight>
          </CallHeader>
          <Stage>
            <Watermark><SkypeBlob size={48} fill="#343434" fg="#000" shade={false} /></Watermark>
            <Screen>
              <TabStrip>
                {tabs.map(t => (
                  <Tab key={t.t} $active={t.active} $sep={t.sep}>
                    {t.fav ? <EasifyyFav /> : <GmailM w={10} h={8} />}
                    <TabLabel>{t.t}</TabLabel>
                    <TabClose><MdClose size={10} /></TabClose>
                  </Tab>
                ))}
                <StripPlus><MdAdd size={15} /></StripPlus>
                <StripRight>
                  <StripOrb><DownTri c="#ddd" w={5} /></StripOrb>
                  <StripSlot><svg width="9" height="9" viewBox="0 0 9 9"><path d="M1 4.500h7" stroke="#888" /></svg></StripSlot>
                  <StripSlot><svg width="9" height="9" viewBox="0 0 9 9" fill="none" stroke="#333"><rect x=".5" y="2" width="6" height="6.500" /><path d="M2.500.500h6v6" /></svg></StripSlot>
                  <StripSlot><MdClose size={12} /></StripSlot>
                </StripRight>
              </TabStrip>
              <Toolbar>
                <NavSlot><MdArrowBack size={13} /></NavSlot>
                <NavSlot $dim><MdArrowForward size={13} /></NavSlot>
                <NavSlot><MdRefresh size={14} /></NavSlot>
                <Omni>
                  <MdLock size={9} color="#555" />
                  <span><UrlHost>mail.google.com</UrlHost>/mail/u/0/#inbox/FMfcgxwLtGjJcqntJNvggRFMGpXFPPlW</span>
                  <OmniEnd><MdRemoveRedEye size={10} /><MdOutlineStarBorder size={12} /></OmniEnd>
                </Omni>
                <ExtGroup>
                  <ExtSlot><ExtU /></ExtSlot>
                  <ExtSlot><ExtDropper /></ExtSlot>
                  <ExtSlot><ExtG /></ExtSlot>
                  <ExtSlot><ExtM /></ExtSlot>
                  <ExtSlot><ExtN /></ExtSlot>
                  <ExtSlot><ExtSun /></ExtSlot>
                  <ExtSlot><MdExtension size={12} color="#555" /></ExtSlot>
                  <ExtSlot><ProfileOrb /></ExtSlot>
                  <ExtSlot><MdMoreVert size={13} color="#555" /></ExtSlot>
                </ExtGroup>
              </Toolbar>
              <Bookmarks>
                <Bookmark $w={47}><AppsGrid />Apps</Bookmark>
                <Bookmark $w={59} $g={5}><YouTube />YouTube</Bookmark>
                <Bookmark $w={49} $g={7}><MapsPin />Maps</Bookmark>
                <Bookmark $w={43}><LmsIco />LMS</Bookmark>
                <Bookmark $w={78} $g={7}><BmFolder />Content Tools</Bookmark>
                <Bookmark $w={60} $g={7}><BmFolder />websites</Bookmark>
                <BookmarksEnd>
                  <BmDivider />
                  <Bookmark $w={84} $g={7}><BmFolder />Other bookmarks</Bookmark>
                  <BmDivider />
                  <Bookmark $w={58} $g={7}><ReadingList />Reading list</Bookmark>
                </BookmarksEnd>
              </Bookmarks>
              <GmailBar>
                <MdMenu size={15} />
                <BurgerGap />
                <GmailM />
                <GmailWord>Gmail</GmailWord>
                <SearchBox>
                  <MdSearch size={16} color="#5f6368" />
                  Search mail
                  <SearchCaret><DownTri c="#5f6368" w={7} /></SearchCaret>
                </SearchBox>
                <GmailEnd>
                  <GmailSlot><MdHelpOutline size={17} /></GmailSlot>
                  <GmailSlot><MdOutlineSettings size={17} /></GmailSlot>
                  <GmailSlot><MdApps size={17} /></GmailSlot>
                  <GmailSlot $ml={3}><ProfileOrb s={22} /></GmailSlot>
                </GmailEnd>
              </GmailBar>
              <MailBody>
                <LeftRail>
                  <Fab><PlusColor /></Fab>
                  <InboxSlot><InboxHalo><InboxMark /></InboxHalo><InboxBadge>150</InboxBadge></InboxSlot>
                  <RailSlot><MdStar size={13} /></RailSlot>
                  <RailSlot><MdWatchLater size={13} /></RailSlot>
                  <RailSlot><MdSend size={13} /></RailSlot>
                  <RailSlot><MdInsertDriveFile size={13} /></RailSlot>
                  <RailSlot><MdExpandMore size={13} /></RailSlot>
                  <RailRule $t={5} $b={1} />
                  <RailSlot><VideoOutline /></RailSlot>
                  <RailSlot><MdVideocam size={14} /></RailSlot>
                  <RailSlot><MdKeyboard size={15} /></RailSlot>
                  <RailRule $t={4} $b={6} />
                  <RailSlot><HangoutIco /></RailSlot>
                  <AvatarSlot><PresenceWrap><ProfileOrb s={19} /><Presence /></PresenceWrap></AvatarSlot>
                  <RailRuleShort />
                  <RailNote>
                    No r<br />ch<RailLink>Start</RailLink>
                  </RailNote>
                </LeftRail>
                <Main>
                  <MailTools>
                    <ToolSlot><MdArrowBack size={13} /></ToolSlot>
                    <BackGap />
                    <ToolSlot><MdArchive size={13} /></ToolSlot>
                    <ToolSlot><MdReport size={14} /></ToolSlot>
                    <ToolSlot><MdDelete size={14} /></ToolSlot>
                    <ToolSep />
                    <ToolSlot><MdDrafts size={14} /></ToolSlot>
                    <ToolSlot><MdWatchLater size={13} /></ToolSlot>
                    <ToolSlot><MdAddTask size={14} /></ToolSlot>
                    <ToolSep />
                    <ToolSlot><MdDriveFileMove size={14} /></ToolSlot>
                    <ToolSlot><MdLabel size={14} /></ToolSlot>
                    <ToolSlot $w={26}><MdMoreVert size={13} /></ToolSlot>
                    <Pager>
                      <PagerCount>1 of 184</PagerCount>
                      <ToolSlot $w={28}><MdChevronLeft size={13} /></ToolSlot>
                      <ToolSlot $w={28}><MdChevronRight size={13} /></ToolSlot>
                      <ToolSlot $w={38}><KbdTiny /><MdArrowDropDown size={9} /></ToolSlot>
                    </Pager>
                  </MailTools>
                  <Email>
                    <Band />
                    <EmailText>
                      <Para>Dear Nitin,</Para>
                      <Para>Thanks for registered with us. Please verify your email by clicking on the verify button.</Para>
                      <ParaLast>Best regards</ParaLast>
                      <ParaLast>Team Easifyy</ParaLast>
                    </EmailText>
                    <LinkRow>
                      <MailLink>{URL}</MailLink>
                      <VerifyBtn>Verify</VerifyBtn>
                    </LinkRow>
                    <Footerish><Questions>Questions?</Questions></Footerish>
                  </Email>
                  <ScrollThumb />
                  <CursorMark><CursorIco /></CursorMark>
                </Main>
                <RightRail>
                  <RightSlot><CalIco /></RightSlot>
                  <RightSlot><KeepIco /></RightSlot>
                  <RightSlot><TasksIco /></RightSlot>
                  <RightSlot><ContactsIco /></RightSlot>
                  <RightRule />
                  <RightSlot><MdAdd size={14} /></RightSlot>
                  <RightBottom><MdChevronRight size={14} /></RightBottom>
                </RightRail>
              </MailBody>
              <Taskbar>
                <StartBtn><WinLogo /></StartBtn>
                <WinSearch><Glass />Type here to search</WinSearch>
                <TaskSlot $w={34}><TaskView /></TaskSlot>
                <TaskSlot $open><Calc /></TaskSlot>
                <TaskSlot $open><WinFolder /></TaskSlot>
                <TaskSlot $open><Notebook /></TaskSlot>
                <TaskSlot $open><Doc c="#2b5bb5" l="W" /></TaskSlot>
                <TaskSlot $open><Doc c="#1e8a45" l="X" /></TaskSlot>
                <TaskSlot $open><SkypeBlob size={16} shade={false} /></TaskSlot>
                <TaskSlot><Sticky /></TaskSlot>
                <TaskSlot><Snip /></TaskSlot>
                <TaskSlot $open $active><Chrome /></TaskSlot>
                <TaskSlot $open><MailApp /></TaskSlot>
                <TaskSlot><NetApp /></TaskSlot>
                <TaskSlot><Loop /></TaskSlot>
                <TaskSlot><FzTiny /></TaskSlot>
                <TaskSlot><AnyDesk /></TaskSlot>
                <TaskSlot $w={16}><TrayCaret /></TaskSlot>
                <TaskSlot $w={17}><TrayBat /></TaskSlot>
                <TaskSlot $w={17}><TrayWifi /></TaskSlot>
                <TaskSlot $w={17}><TraySound /></TaskSlot>
                <TaskLang>ENG<br />IN</TaskLang>
                <TaskDate>16:12<br />24-03-2021</TaskDate>
                <TaskSlot $w={24} $ml={2}><Notify /></TaskSlot>
              </Taskbar>
              <StatusTip>{URL}</StatusTip>
            </Screen>
          </Stage>
          <Footer>
            <RoundBtn><MuteMic c="#ddd" s={22} sw={.8} /></RoundBtn>
            <RoundBtn><CamOff /></RoundBtn>
            <RoundBtn $danger><HangUp /></RoundBtn>
            <FooterEnd>
              <FootAction $w={80}><FootIcon><ChatIco /></FootIcon><FootLabel>Chat</FootLabel></FootAction>
              <FootAction $w={86}><FootIcon><ShareIco /></FootIcon><FootLabel>Share screen</FootLabel></FootAction>
              <FootAction $w={74}><FootIcon /><FootLabel>React</FootLabel></FootAction>
              <FootAction $w={76}><FootIcon><DotsIco /></FootIcon><FootLabel>More</FootLabel></FootAction>
            </FooterEnd>
          </Footer>
        </Win>
      </Body>
      <ReactionPill>
        <Sad /><Thinking /><Smile /><Laugh /><Thumb /><Heart />
      </ReactionPill>
    </Root>
  );
}
